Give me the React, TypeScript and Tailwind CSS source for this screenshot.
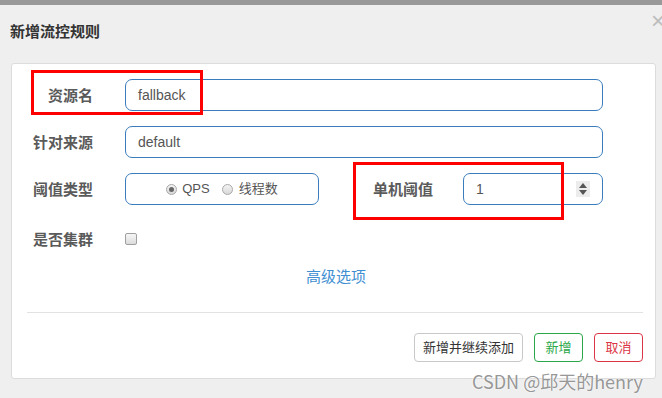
import React from 'react';

const font = "font-['Liberation_Sans','Noto_Sans_CJK_SC',sans-serif]";

const Label: React.FC<{ text: string; className?: string }> = ({ text, className }) => (
  <div className={`w-[60px] shrink-0 text-right text-[15px] font-bold text-[#5a5a5a] leading-none ${className ?? ''}`}>{text}</div>
);

const TextBox: React.FC<{ value: string; className?: string; children?: React.ReactNode }> = ({ value, className, children }) => (
  <div className={`h-[32px] border border-[#3a7dbd] rounded-[7px] bg-white flex items-center pl-[12px] pr-[12px] text-[14px] text-[#555] ${className ?? ''}`}>
    <span className="flex-1">{value}</span>
    {children}
  </div>
);

const Radio: React.FC<{ checked?: boolean }> = ({ checked }) => (
  <span className="w-[11px] h-[11px] rounded-full border border-[#a8a8a8] bg-gradient-to-b from-[#f4f4f4] to-[#d8d8d8] flex items-center justify-center">
    {checked && <span className="w-[5px] h-[5px] rounded-full bg-[#666]" />}
  </span>
);

export default function App() {
  return (
    <div className={`w-[662px] h-[398px] bg-[#efefef] overflow-hidden relative ${font}`}>
      <div className="h-[5px] bg-[#999]" />
      <div className="relative h-[58px] pl-[10px] pt-[17px]">
        <h4 className="text-[15px] font-bold text-[#333] leading-[20px]">新增流控规则</h4>
        <span className="absolute right-[-3px] top-[4px] text-[24px] text-[#bdbdbd] leading-none">×</span>
      </div>

      <div className="ml-[11px] w-[645px] h-[316px] bg-white border border-[#dcdcdc] rounded-[3px] pt-[15px] flex flex-col">
        <div className="flex flex-col gap-[15px]">
          <div className="flex items-center pl-[21px]">
            <Label text="资源名" />
            <TextBox value="fallback" className="ml-[32px] w-[478px]" />
          </div>
          <div className="flex items-center pl-[21px]">
            <Label text="针对来源" />
            <TextBox value="default" className="ml-[32px] w-[478px]" />
          </div>
          <div className="flex items-center pl-[21px]">
            <Label text="阈值类型" />
            <div className="ml-[32px] w-[194px] h-[32px] border border-[#3a7dbd] rounded-[7px] flex items-center justify-center text-[13px] text-[#555]">
              <Radio checked />
              <span className="ml-[5px]">QPS</span>
              <span className="ml-[12px]"><Radio /></span>
              <span className="ml-[6px]">线程数</span>
            </div>
            <Label text="单机阈值" className="ml-[53px] w-[61px]" />
            <TextBox value="1" className="ml-[30px] w-[140px] pr-[12px]">
              <span className="w-[14px] h-[16px] bg-[#ececec] flex flex-col items-center justify-center gap-[2px]">
                <span className="w-0 h-0 border-x-[4px] border-x-transparent border-b-[5px] border-b-[#555]" />
                <span className="w-0 h-0 border-x-[4px] border-x-transparent border-t-[5px] border-t-[#555]" />
              </span>
            </TextBox>
          </div>
        </div>

        <div className="flex items-center pl-[21px] mt-[26px] h-[16px]">
          <Label text="是否集群" />
          <span className="ml-[32px] w-[12px] h-[12px] rounded-[2px] border border-[#a0a0a0] bg-gradient-to-b from-[#f6f6f6] to-[#dcdcdc]" />
        </div>

        <div className="mt-[22px] text-center pl-[5px] text-[15px] text-[#3f8fd2] leading-none">高级选项</div>

        <div className="mt-[28px] ml-[15px] mr-[12px] h-px bg-[#e2e2e2]" />

        <div className="mt-[20px] mr-[12px] flex justify-end gap-[11px] text-[13px]">
          <button className="w-[109px] h-[29px] border border-[#c8c8c8] rounded-[4px] text-[#333] bg-white">新增并继续添加</button>
          <button className="w-[49px] h-[29px] border border-[#2aa748] rounded-[4px] text-[#2aa748] bg-white">新增</button>
          <button className="w-[49px] h-[29px] border border-[#dc3545] rounded-[4px] text-[#dc3545] bg-white">取消</button>
        </div>
      </div>

      {/* annotations */}
      <div className="absolute left-[31px] top-[70px] w-[172px] h-[45px] border-[3px] border-[#ff0000]" />
      <div className="absolute left-[353px] top-[162px] w-[211px] h-[58px] border-[3px] border-[#ff0000]" />

      <div className="absolute left-[472px] top-[368px] text-[18px] leading-[26px] text-[#8a8a8a]/90 font-['Noto_Sans_CJK_SC',sans-serif] [text-shadow:0_0_2px_#fff]">
        CSDN @邱天的henry
      </div>
    </div>
  );
}
